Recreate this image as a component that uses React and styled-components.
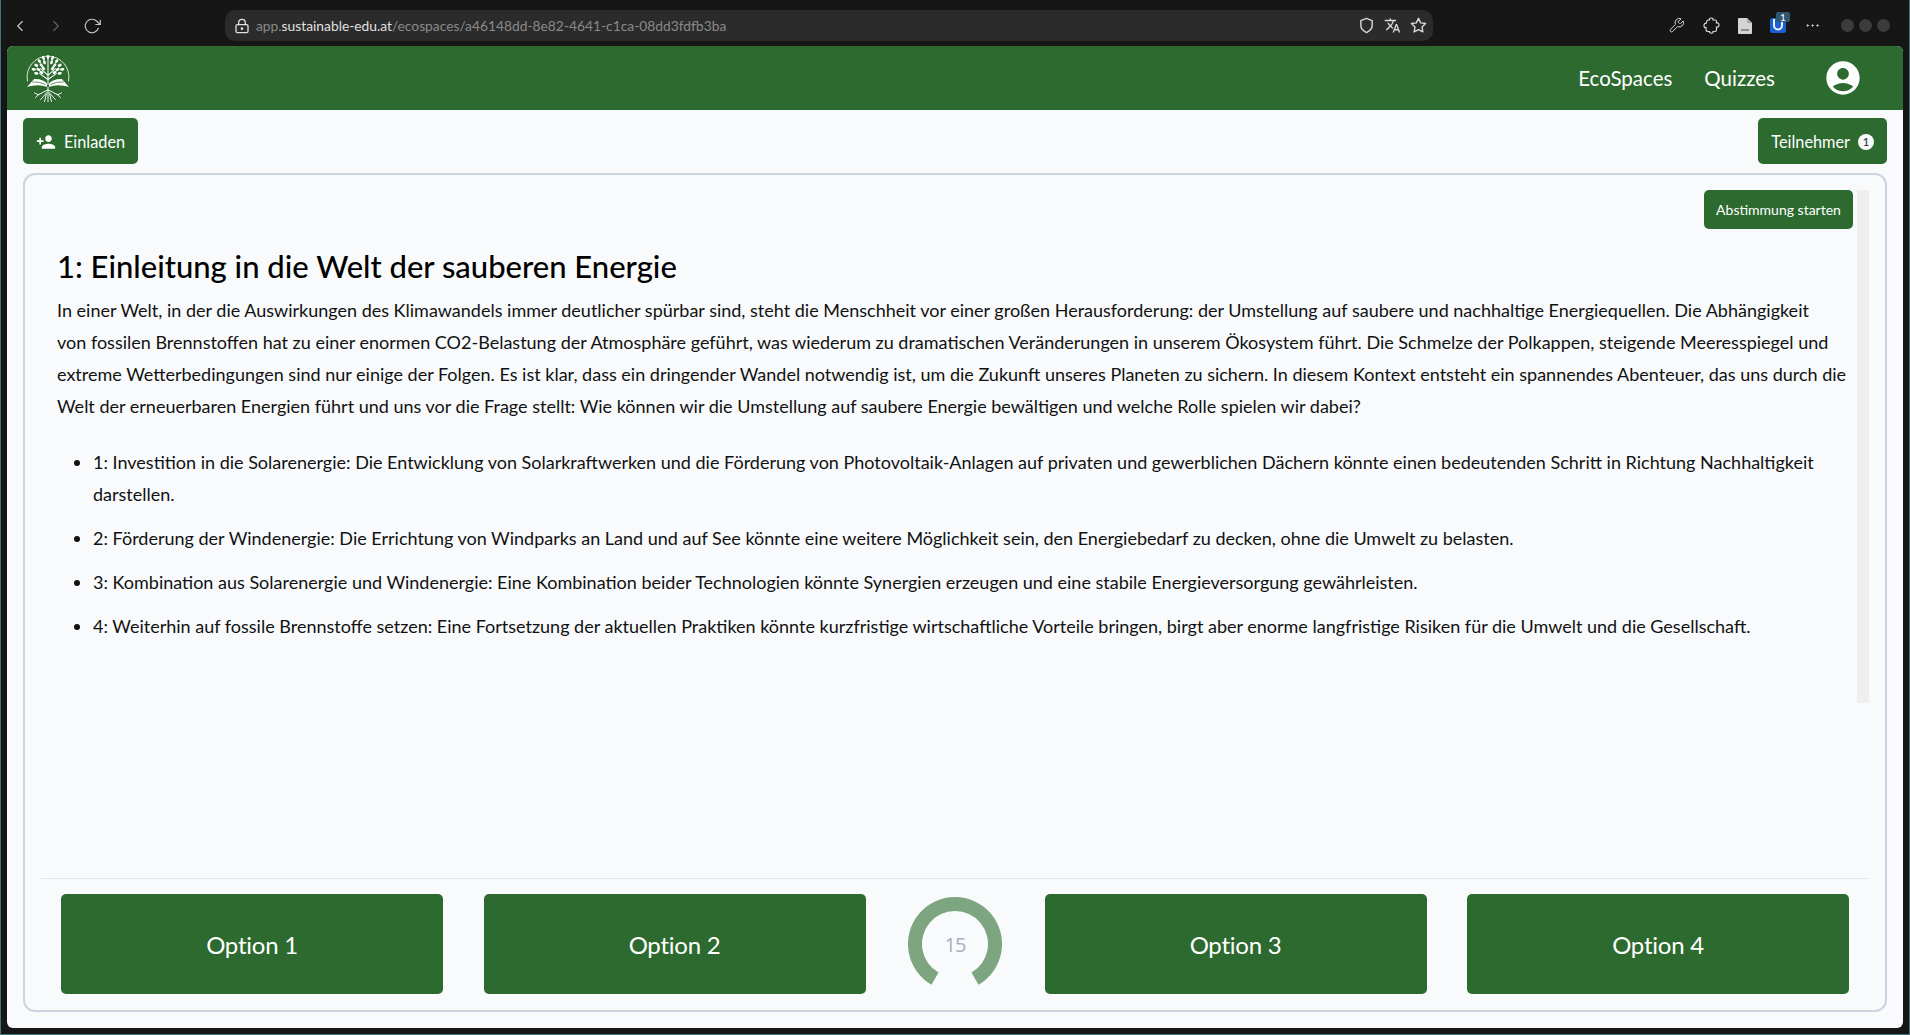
import React from 'react';
import styled, { createGlobalStyle } from 'styled-components';
import { FiChevronLeft, FiChevronRight, FiRotateCw, FiShield, FiStar, FiMoreHorizontal } from 'react-icons/fi';
import { MdPersonAdd, MdTranslate, MdAccountCircle } from 'react-icons/md';
import { LuLockKeyhole, LuWrench } from 'react-icons/lu';

const GREEN = '#2d6a2f';

const GlobalStyle = createGlobalStyle`
  html, body {
    margin: 0;
    padding: 0;
    background: #161616;
  }
  * { box-sizing: border-box; }
`;

const Window = styled.div`
  width: 1910px;
  height: 1035px;
  background: #161616;
  border: 1px solid #41737a;
  border-top: none;
  display: flex;
  flex-direction: column;
  padding: 0 6px 6px 6px;
  font-family: 'Lato', sans-serif;
  overflow: hidden;
`;

const BrowserBar = styled.div`
  height: 31px;
  margin: 10px 0 5px 0;
  display: flex;
  align-items: center;
  color: #c9c9c9;
  flex-shrink: 0;
`;

const NavIcons = styled.div`
  width: 218px;
  display: flex;
  align-items: center;
  gap: 18px;
  padding-left: 4px;
`;

const NavIcon = styled.span`
  display: flex;
  color: ${({ $dim }) => ($dim ? '#666' : '#c9c9c9')};
  font-size: 18px;
  svg { stroke-width: 1.5; }
`;

const AddressBar = styled.div`
  width: 1208px;
  height: 31px;
  background: #2b2b2b;
  border-radius: 10px;
  display: flex;
  align-items: center;
  padding: 0 6px 0 9px;
  font-size: 13.8px;
  color: #8a8a8a;
`;

const LockIcon = styled.span`
  display: flex;
  font-size: 16px;
  color: #e0e0e0;
`;

const Url = styled.span`
  margin-left: 6px;
  flex: 1;
  white-space: nowrap;
  b { font-weight: 400; color: #e0e0e0; }
`;

const AddressIcon = styled.span`
  display: flex;
  margin-left: 9px;
  font-size: 17px;
  color: #d8d8d8;
`;

const ExtIcons = styled.div`
  flex: 1;
  display: flex;
  align-items: center;
  justify-content: flex-end;
  gap: 18px;
  padding-right: 13px;
`;

const ExtIcon = styled.span`
  position: relative;
  display: flex;
  font-size: 17px;
  color: #d8d8d8;
  svg { stroke-width: 1.4; }
`;

const MagnetBadge = styled.span`
  position: absolute;
  top: -6px;
  right: -4px;
  width: 14px;
  height: 10px;
  background: #2f5570;
  border-radius: 2px;
  color: #fff;
  font-size: 10px;
  line-height: 10px;
  text-align: center;
`;

const Dots = styled.div`
  display: flex;
  gap: 5px;
  margin-left: 2px;
`;

const Dot = styled.span`
  width: 13px;
  height: 13px;
  border-radius: 50%;
  background: #3c3c3c;
`;

const Page = styled.div`
  flex: 1;
  min-height: 0;
  background: #f8fafc;
  border-radius: 6px;
  display: flex;
  flex-direction: column;
  overflow: hidden;
`;

const Header = styled.header`
  height: 64px;
  background: ${GREEN};
  display: flex;
  align-items: center;
  justify-content: space-between;
  padding: 0 40px 0 19px;
  flex-shrink: 0;
`;

const Nav = styled.nav`
  display: flex;
  align-items: center;
`;

const NavLink = styled.a`
  color: #fff;
  font-size: 20.5px;
  margin-right: 32px;
`;

const Avatar = styled.span`
  display: flex;
  margin-left: 16px;
  color: #fff;
  font-size: 40px;
`;

const Toolbar = styled.div`
  display: flex;
  justify-content: space-between;
  padding: 8px 16px 0 16px;
  flex-shrink: 0;
`;

const ToolButton = styled.button`
  height: 46px;
  background: ${GREEN};
  color: #fff;
  border: none;
  border-radius: 5px;
  font-family: inherit;
  font-size: 16.3px;
  padding: 1px 13px 0;
  display: flex;
  align-items: center;
  gap: 8px;
`;

const CountBadge = styled.span`
  width: 16px;
  height: 16px;
  border-radius: 50%;
  background: #f8fafc;
  color: #1e293b;
  font-size: 12px;
  line-height: 16px;
  text-align: center;
`;

const Card = styled.section`
  flex: 1;
  min-height: 0;
  margin: 9px 16px 16px 16px;
  border: 2px solid #cbd5e1;
  border-radius: 12px;
  display: flex;
  flex-direction: column;
`;

const Scroller = styled.div`
  flex: 1;
  min-height: 0;
  position: relative;
  padding: 15px 32px 0 32px;
`;

const ScrollTrack = styled.div`
  position: absolute;
  top: 15px;
  right: 16px;
  width: 12px;
  height: 513px;
  background: #efefef;
`;

const StartRow = styled.div`
  display: flex;
  justify-content: flex-end;
`;

const StartButton = styled.button`
  height: 39px;
  width: 149px;
  background: ${GREEN};
  color: #fff;
  border: none;
  border-radius: 5px;
  font-family: inherit;
  font-size: 14px;
`;

const Title = styled.h1`
  margin: 14px 0 0 0;
  font-size: 31px;
  line-height: 46px;
  font-weight: 500;
  color: #000;
`;

const Paragraph = styled.p`
  margin: 5px 0 0 0;
  font-size: 18px;
  line-height: 32px;
  color: #111;
`;

const OptionList = styled.ul`
  margin: 24px 0 0 0;
  padding: 0 0 0 36px;
`;

const OptionItem = styled.li`
  font-size: 18px;
  line-height: 32px;
  color: #111;
  margin-bottom: 12px;
`;

const VoteBar = styled.div`
  height: 132px;
  margin: 0 16px;
  border-top: 1px solid #e2e8f0;
  padding: 15px 20px 0 20px;
  display: flex;
  flex-shrink: 0;
  align-items: flex-start;
  justify-content: space-between;
`;

const VoteButton = styled.button`
  width: 382px;
  height: 100px;
  background: ${GREEN};
  color: #fff;
  border: none;
  border-radius: 5px;
  font-family: inherit;
  font-size: 24px;
  letter-spacing: -0.25px;
`;

const Timer = styled.div`
  position: relative;
  width: 94px;
  height: 94px;
  margin: 3px 2px 0;
`;

const TimerValue = styled.span`
  position: absolute;
  inset: 0;
  display: flex;
  align-items: center;
  justify-content: center;
  font-family: 'Open Sans', sans-serif;
  font-size: 20px;
  letter-spacing: -1px;
  color: #a5afc0;
`;

const bullets = [
  '1: Investition in die Solarenergie: Die Entwicklung von Solarkraftwerken und die Förderung von Photovoltaik-Anlagen auf privaten und gewerblichen Dächern könnte einen bedeutenden Schritt in Richtung Nachhaltigkeit darstellen.',
  '2: Förderung der Windenergie: Die Errichtung von Windparks an Land und auf See könnte eine weitere Möglichkeit sein, den Energiebedarf zu decken, ohne die Umwelt zu belasten.',
  '3: Kombination aus Solarenergie und Windenergie: Eine Kombination beider Technologien könnte Synergien erzeugen und eine stabile Energieversorgung gewährleisten.',
  '4: Weiterhin auf fossile Brennstoffe setzen: Eine Fortsetzung der aktuellen Praktiken könnte kurzfristige wirtschaftliche Vorteile bringen, birgt aber enorme langfristige Risiken für die Umwelt und die Gesellschaft.',
];

// leaves of the logo tree: x, y, rotation
const leaves = [
  [21.5, 4, 0], [17, 5, -30], [26, 5, 30], [13, 8, -40], [30, 8, 40], [18, 9, -20], [25, 9, 20],
  [10, 12, -60], [33, 12, 60], [15, 12, -40], [28, 12, 40], [7.5, 16, -80], [35.5, 16, 80],
  [12, 16, -60], [31, 16, 60], [17, 15, -40], [26, 15, 40], [10, 20, -80], [33, 20, 80],
  [15, 19, -60], [28, 19, 60],
];

const Logo = () => (
  <svg width="44" height="50" viewBox="0 0 43 49" fill="none" stroke="#fff">
    <path d="M1.5 28 A20.5 20.5 0 1 1 41.5 28" strokeWidth="0.8" />
    <path d="M21.5 6 V31 M21.5 22 L14 15 M21.5 22 L29 15 M21.5 26 L13 20 M21.5 26 L30 20" strokeWidth="1" />
    <g fill="#fff" stroke="none">
      {leaves.map(([x, y, r]) => (
        <ellipse key={`${x}-${y}`} cx={x} cy={y} rx="1.3" ry="2.1" transform={`rotate(${r} ${x} ${y})`} />
      ))}
      <path d="M1 33 L8 25.5 Q16 25 20.5 30 V33 Q12 30 1 33 Z" />
      <path d="M42 33 L35 25.5 Q27 25 22.5 30 V33 Q31 30 42 33 Z" />
    </g>
    <path d="M3 35 Q12 32 21 35 M40 35 Q31 32 22 35 M6 28.5 Q13 27.5 19 31 M37 28.5 Q30 27.5 24 31" stroke={GREEN} strokeWidth="0.7" />
    <path d="M21.5 33 V48 M21.5 36 L12 41 L8 39 M21.5 36 L31 41 L35 39 M21 38 L14 46 M22 38 L29 46 M20 40 L18 48 M23 40 L25 48 M13 40 L9 44 M30 40 L34 44" strokeWidth="0.9" />
  </svg>
);

const PuzzleIcon = () => (
  <svg width="17" height="17" viewBox="0 0 17 17" fill="none" stroke="currentColor">
    <path d="M4 4 Q4 3 5 3 H6.5 Q6 1 8 1 Q10.500 1 10 3 H12 Q13.500 3 13.500 4.500 V6 Q16 5.500 16 8 Q16 10.500 13.500 10 V12.500 Q13.500 14.500 12 14.500 H10 Q10.500 16.500 8 16 Q6 16 6.500 14.500 H5 Q3 14.500 3 12.500 V10.500 Q1 11 1 8.500 Q1 6 3 6.500 Z" strokeWidth="1.2" />
  </svg>
);

const DocIcon = () => (
  <svg width="14" height="16" viewBox="0 0 14 16">
    <path d="M0 1 Q0 0 1 0 H9 L14 5 V15 Q14 16 13 16 H1 Q0 16 0 15 Z" fill="#d4d4d4" />
    <path d="M9 0 V5 H14 Z" fill="#a8a8a8" />
    <rect x="3" y="11" width="8" height="2" fill="#8c8c8c" />
  </svg>
);

const MagnetIcon = () => (
  <svg width="16" height="15" viewBox="0 0 16 15">
    <rect width="16" height="15" rx="2.500" fill="#1b5fd0" />
    <path d="M4 1 V7.500 A4 4 0 0 0 12 7.500 V1" fill="none" stroke="#eef3fb" strokeWidth="2" />
  </svg>
);

// 300 degree arc with the gap at the bottom
const TimerRing = () => (
  <svg width="94" height="94" viewBox="0 0 94 94">
    <path d="M23.5 87.7 A47 47 0 1 1 70.5 87.7 L63.5 75.6 A33 33 0 1 0 30.5 75.6 Z" fill="#7da580" />
  </svg>
);

export default function App() {
  return (
    <Window>
      <GlobalStyle />
      <BrowserBar>
        <NavIcons>
          <NavIcon><FiChevronLeft /></NavIcon>
          <NavIcon $dim><FiChevronRight /></NavIcon>
          <NavIcon><FiRotateCw /></NavIcon>
        </NavIcons>
        <AddressBar>
          <LockIcon><LuLockKeyhole /></LockIcon>
          <Url>app.<b>sustainable-edu.at</b>/ecospaces/a46148dd-8e82-4641-c1ca-08dd3fdfb3ba</Url>
          <AddressIcon><FiShield /></AddressIcon>
          <AddressIcon><MdTranslate /></AddressIcon>
          <AddressIcon><FiStar /></AddressIcon>
        </AddressBar>
        <ExtIcons>
          <ExtIcon><LuWrench /></ExtIcon>
          <ExtIcon><PuzzleIcon /></ExtIcon>
          <ExtIcon><DocIcon /></ExtIcon>
          <ExtIcon><MagnetIcon /><MagnetBadge>1</MagnetBadge></ExtIcon>
          <ExtIcon><FiMoreHorizontal /></ExtIcon>
          <Dots><Dot /><Dot /><Dot /></Dots>
        </ExtIcons>
      </BrowserBar>
      <Page>
        <Header>
          <Logo />
          <Nav>
            <NavLink>EcoSpaces</NavLink>
            <NavLink>Quizzes</NavLink>
            <Avatar><MdAccountCircle /></Avatar>
          </Nav>
        </Header>
        <Toolbar>
          <ToolButton><MdPersonAdd size={20} /> Einladen</ToolButton>
          <ToolButton>Teilnehmer <CountBadge>1</CountBadge></ToolButton>
        </Toolbar>
        <Card>
          <Scroller>
            <ScrollTrack />
            <StartRow><StartButton>Abstimmung starten</StartButton></StartRow>
            <Title>1: Einleitung in die Welt der sauberen Energie</Title>
            <Paragraph>
              In einer Welt, in der die Auswirkungen des Klimawandels immer deutlicher spürbar sind, steht die Menschheit vor einer großen Herausforderung: der Umstellung auf saubere und nachhaltige Energiequellen. Die Abhängigkeit<br />
              von fossilen Brennstoffen hat zu einer enormen CO2-Belastung der Atmosphäre geführt, was wiederum zu dramatischen Veränderungen in unserem Ökosystem führt. Die Schmelze der Polkappen, steigende Meeresspiegel und<br />
              extreme Wetterbedingungen sind nur einige der Folgen. Es ist klar, dass ein dringender Wandel notwendig ist, um die Zukunft unseres Planeten zu sichern. In diesem Kontext entsteht ein spannendes Abenteuer, das uns durch die<br />
              Welt der erneuerbaren Energien führt und uns vor die Frage stellt: Wie können wir die Umstellung auf saubere Energie bewältigen und welche Rolle spielen wir dabei?
            </Paragraph>
            <OptionList>
              {bullets.map((text) => <OptionItem key={text}>{text}</OptionItem>)}
            </OptionList>
          </Scroller>
          <VoteBar>
            <VoteButton>Option 1</VoteButton>
            <VoteButton>Option 2</VoteButton>
            <Timer>
              <TimerRing />
              <TimerValue>15</TimerValue>
            </Timer>
            <VoteButton>Option 3</VoteButton>
            <VoteButton>Option 4</VoteButton>
          </VoteBar>
        </Card>
      </Page>
    </Window>
  );
}
